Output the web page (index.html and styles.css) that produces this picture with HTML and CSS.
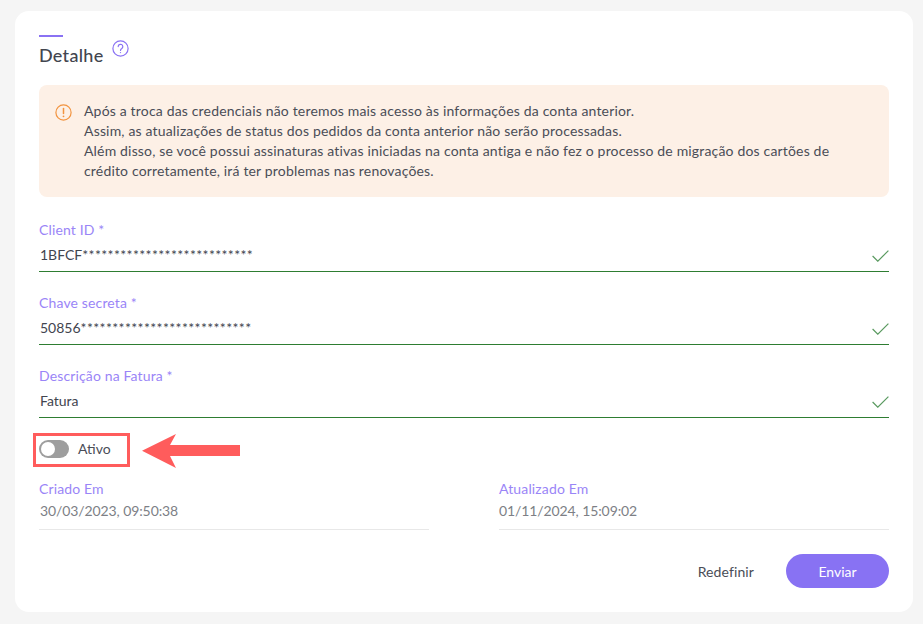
FILE: index.html
```html
<!DOCTYPE html>
<html lang="pt">
<head>
<meta charset="utf-8">
<title>Detalhe</title>
<link rel="stylesheet" href="styles.css">
</head>
<body>
<main class="card">
  <span class="accent"></span>
  <div class="heading">
    <h1>Detalhe</h1>
    <svg class="help" width="17" height="17" viewBox="0 0 17 17" fill="none" stroke="#8a72f3" stroke-width="1.2"><circle cx="8.5" cy="8.5" r="7.6"/><path d="M6.2 6.6a2.3 2.3 0 1 1 3.6 1.9c-.8.5-1.3 1-1.3 2" stroke-linecap="round"/><circle cx="8.5" cy="12.6" r=".7" fill="#8a72f3" stroke="none"/></svg>
  </div>
  <section class="alert">
    <svg class="alert-icon" width="17" height="17" viewBox="0 0 17 17" fill="none" stroke="#f2933f" stroke-width="1.2"><circle cx="8.5" cy="8.5" r="7.6"/><path d="M8.5 4.4v5.2" stroke-width="1.5" stroke-linecap="round"/><circle cx="8.5" cy="12.3" r=".9" fill="#f2933f" stroke="none"/></svg>
    <p>Após a troca das credenciais não teremos mais acesso às informações da conta anterior.<br>Assim, as atualizações de status dos pedidos da conta anterior não serão processadas.<br>Além disso, se você possui assinaturas ativas iniciadas na conta antiga e não fez o processo de migração dos cartões de<br>crédito corretamente, irá ter problemas nas renovações.</p>
  </section>
  <div class="fields">
    <div class="field">
      <label>Client ID *</label>
      <div class="value"><span>1BFCF<span class="mask">***************************</span></span><svg class="check" width="17" height="12" viewBox="0 0 17 12" fill="none" stroke="#5a9a60" stroke-width="1.2"><path d="M.6 6l5.2 5.2L16.4.6"/></svg></div>
    </div>
    <div class="field">
      <label>Chave secreta *</label>
      <div class="value"><span>50856<span class="mask">***************************</span></span><svg class="check" width="17" height="12" viewBox="0 0 17 12" fill="none" stroke="#5a9a60" stroke-width="1.2"><path d="M.6 6l5.2 5.2L16.4.6"/></svg></div>
    </div>
    <div class="field">
      <label>Descrição na Fatura *</label>
      <div class="value"><span>Fatura</span><svg class="check" width="17" height="12" viewBox="0 0 17 12" fill="none" stroke="#5a9a60" stroke-width="1.2"><path d="M.6 6l5.2 5.2L16.4.6"/></svg></div>
    </div>
  </div>
  <div class="toggle-row">
    <span class="switch"><span class="knob"></span></span>
    <span class="toggle-label">Ativo</span>
    <span class="highlight"></span>
    <svg class="arrow" width="98" height="34" viewBox="0 0 98 34"><path d="M0 16.7L34 0l-6 11h70v11H28l6 12z" fill="#ff5c5c"/></svg>
  </div>
  <div class="meta">
    <div class="meta-item"><div class="meta-label">Criado Em</div><div class="meta-value">30/03/2023, 09:50:38</div></div>
    <div class="meta-item meta-item-right"><div class="meta-label">Atualizado Em</div><div class="meta-value">01/11/2024, 15:09:02</div></div>
  </div>
  <div class="actions">
    <button class="btn-text" type="button">Redefinir</button>
    <button class="btn-primary" type="button">Enviar</button>
  </div>
</main>
</body>
</html>
```
FILE: styles.css
```css
* { box-sizing: border-box; }
html, body { margin: 0; height: 100%; }
body {
  background: #f5f5f5;
  padding: 11px 10px 12px 15px;
  font-family: "Lato", "Noto Sans", sans-serif;
  overflow: hidden;
}
.card {
  display: flex;
  flex-direction: column;
  height: 601px;
  background: #fff;
  border-radius: 14px;
  padding: 24px;
}
.accent { display: block; width: 24px; height: 2px; background: #8a72f3; }
.heading { display: flex; align-items: flex-start; height: 48px; }
h1 { margin: 6px 0 0; font-size: 18px; line-height: 24px; font-weight: 500; letter-spacing: .3px; color: #42454f; }
.help { margin: 3px 0 0 8px; }
.alert {
  display: flex;
  gap: 12px;
  height: 112px;
  background: #fdf0e6;
  border-radius: 8px;
  padding: 16px 16px 0 16px;
}
.alert-icon { flex: none; margin-top: 3px; }
.alert p { margin: 0; font-size: 14px; line-height: 20px; letter-spacing: .17px; color: #4a4d57; }
.fields { margin-top: 22px; }
.field { height: 73px; }
label { display: block; font-size: 14px; line-height: 22px; letter-spacing: .14px; color: #9a85f7; }
.value {
  display: flex;
  align-items: center;
  justify-content: space-between;
  height: 31px;
  padding: 0 0 4px 1px;
  border-bottom: 1px solid #2e7d32;
  font-size: 14px;
  color: #42454f;
}
.mask { letter-spacing: .38px; }
.check { margin-top: 4px; }
.toggle-row { position: relative; display: flex; align-items: center; height: 18px; margin-top: 2px; gap: 9px; }
.switch { display: block; width: 30px; height: 18px; border-radius: 9px; background: #9e9e9e; padding: 2px; }
.knob { display: block; width: 14px; height: 14px; border-radius: 50%; background: #fff; }
.toggle-label { margin-top: -2px; font-size: 14px; color: #4a4d57; }
.highlight { position: absolute; left: -6px; top: -7px; width: 97px; height: 34px; border: 3px solid #ff5c5c; }
.arrow { position: absolute; left: 103px; top: -6px; }
.meta { display: grid; grid-template-columns: 390px 390px; justify-content: space-between; margin-top: 21px; }
.meta-item { height: 51px; border-bottom: 1px solid #e8e8e8; }
.meta-item-right { padding-left: 0; }
.meta-label { font-size: 14px; line-height: 20px; letter-spacing: .14px; color: #9a85f7; }
.meta-value { padding-left: 1px; font-size: 14px; line-height: 24px; letter-spacing: -.1px; color: #7d7f86; }
.meta-item-right .meta-value { padding-left: 0; }
.actions { display: flex; justify-content: flex-end; align-items: center; gap: 32px; margin-top: 24px; }
button { font: inherit; font-size: 14px; border: 0; cursor: pointer; }
.btn-text { background: none; color: #4a4d57; padding: 0; letter-spacing: .1px; }
.btn-primary { width: 103px; height: 34px; border-radius: 17px; background: #8872f3; color: #fff; }
```
